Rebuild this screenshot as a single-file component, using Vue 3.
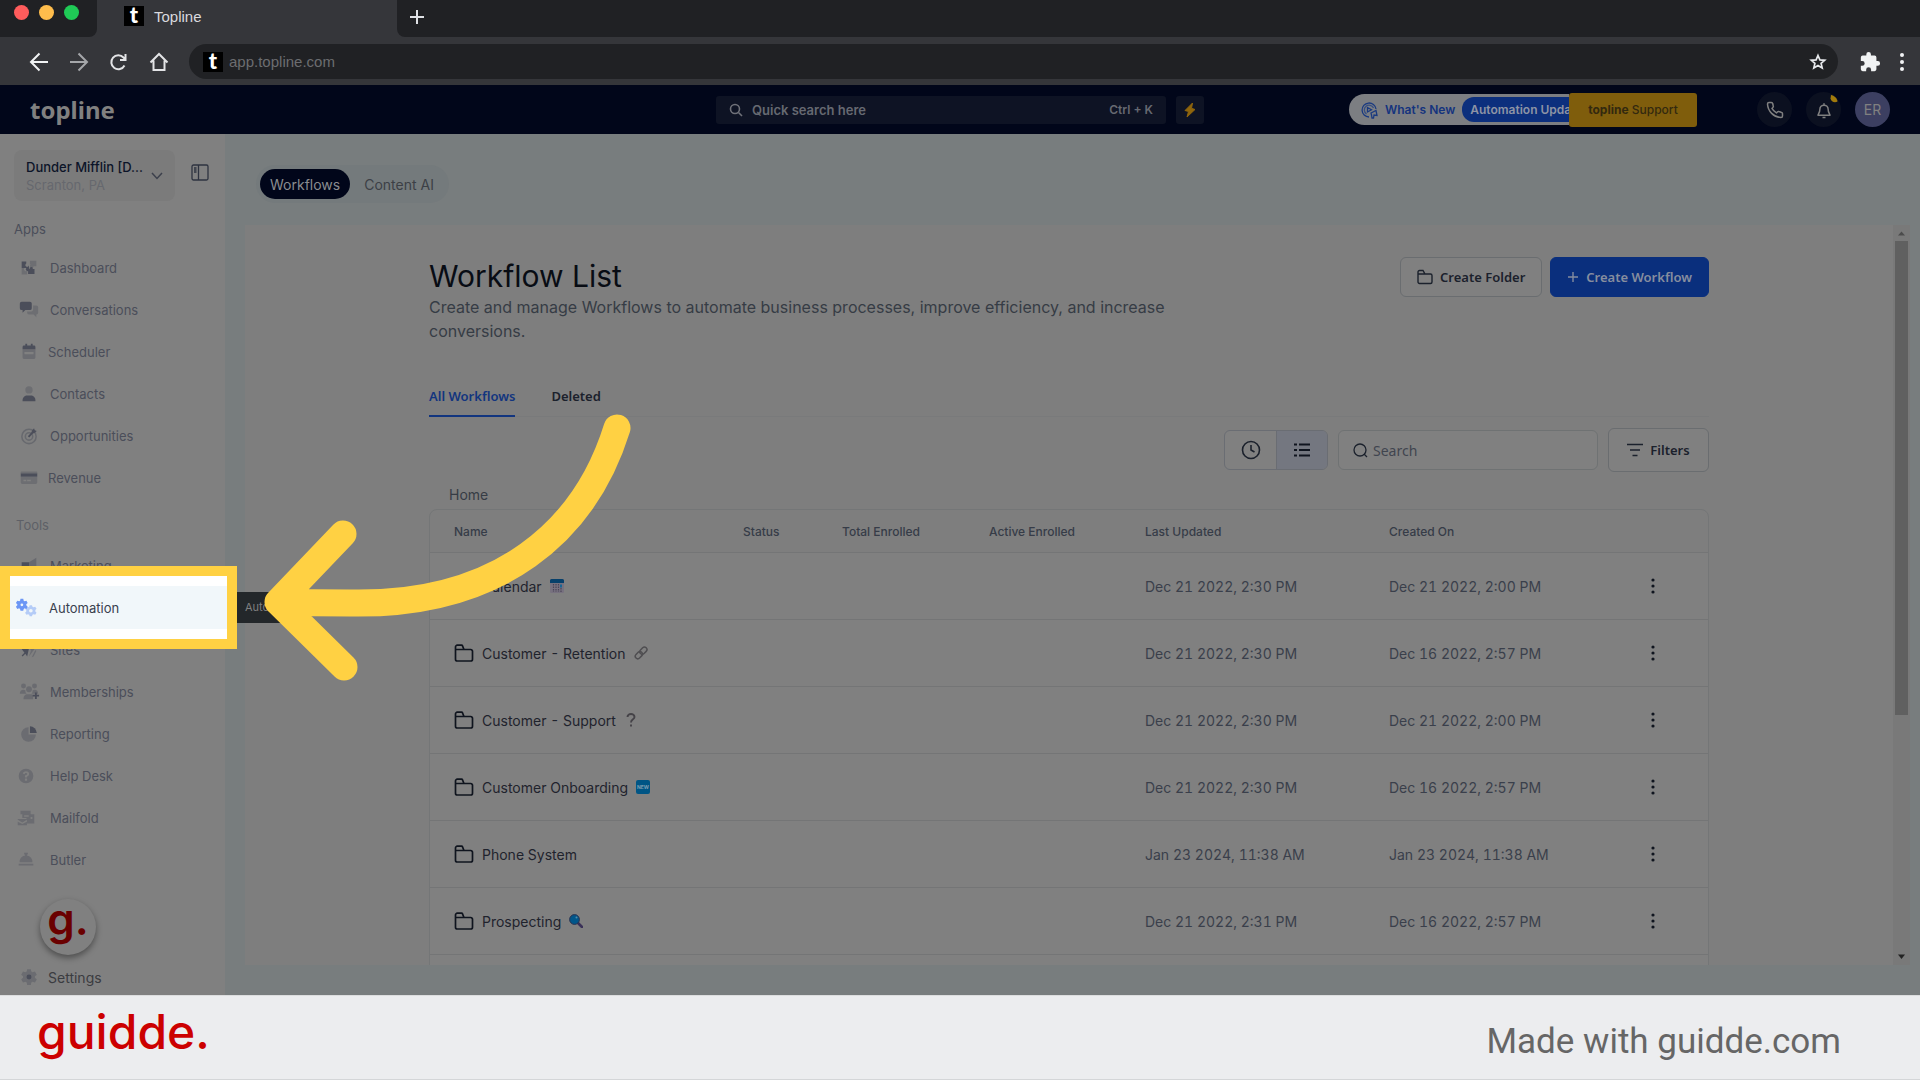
<script setup>
import { ref } from 'vue'

const url = ref('app.topline.com')
const quickSearch = ref('')
const workflowSearch = ref('')

const icons = {
  dashboard:
    '<path d="M4 5h5v2a2 2 0 1 0 3 2v3a2 2 0 1 1-3 0H4z"/><path d="M4 12h3a2 2 0 1 0 3 0v7H4z" opacity=".35"/><path d="M11 13h2a1.600 1.600 0 1 1 3 0h2v5.500h-7z"/><path d="M13 4h7v6h-3a2 2 0 1 1-1-2h-3z" opacity=".35"/>',
  chat:
    '<path d="M4 3h9a2 2 0 0 1 2 2v5a2 2 0 0 1-2 2H8l-3 3v-3H4a2 2 0 0 1-2-2V5a2 2 0 0 1 2-2z"/><path d="M16.500 7H20a2 2 0 0 1 2 2v6a2 2 0 0 1-2 2v3l-3-3h-5a2 2 0 0 1-2-2v-1.500h4.500a2 2 0 0 0 2-2z" opacity=".35"/>',
  calendar:
    '<path d="M5 9h14v9a1.500 1.500 0 0 1-1.500 1.500h-11A1.500 1.500 0 0 1 5 18zm2 3v2.500h10V12z" fill-rule="evenodd" opacity=".4"/><path d="M6.500 5H8V3h2v2h4V3h2v2h1.500A1.500 1.500 0 0 1 19 6.500V9H5V6.500A1.500 1.500 0 0 1 6.500 5z"/>',
  contact:
    '<circle cx="12" cy="7.500" r="4" opacity=".35"/><path d="M5 20v-1.500c0-3 2.500-5 5-5h4c2.500 0 5 2 5 5V20z"/>',
  target:
    '<g fill="none" stroke="currentColor" stroke-width="1.700" opacity=".45"><circle cx="12" cy="12.500" r="7.800"/><circle cx="12" cy="12.500" r="4"/></g><path d="M11.500 13l5-5.500" fill="none" stroke="currentColor" stroke-width="2"/><path d="M15 6.500l2.500-3 .800 2.200 2.200.800-3 2.500H15z"/>',
  card:
    '<path d="M4 5h16a1 1 0 0 1 1 1v1H3V6a1 1 0 0 1 1-1z" opacity=".35"/><path d="M3 7h18v3.500H3z"/><path d="M3 10.500h18V17a1.500 1.500 0 0 1-1.500 1.500h-15A1.500 1.500 0 0 1 3 17zM6 14v1.500h3V14zm4 0v1.500h4V14z" fill-rule="evenodd" opacity=".35"/>',
  megaphone:
    '<path d="M4 8h8v7H9l1 5H7l-1-5H4z"/><path d="M12 8l8-5v18l-8-6z" opacity=".45"/>',
  rocket:
    '<path d="M4 11l8-1-2 9-2-3-3 3-1-1 3-3z"/><path d="M13 9l6-5-1 7-6 8 2-6zM19 12l-4 8 2-1 3-6z" opacity=".4"/>',
  members:
    '<g opacity=".4"><circle cx="6" cy="5.500" r="2.700"/><circle cx="18" cy="5.500" r="2.700"/><circle cx="12" cy="9" r="3.200"/><path d="M2 14c0-3 1.500-4.500 4-4.500l2 .500c0 2 .500 3 1.500 4zM22 14c0-3-1.500-4.500-4-4.500l-2 .500c0 2-.500 3-1.500 4zM6 20c0-4 2-5.500 4-5.500h4c1.500 0 2 .500 2.500 1.500v4z"/></g><path d="M18.500 12.500h2V15H23v2h-2.500v2.500h-2V17H16v-2h2.500z"/>',
  pie:
    '<path d="M11.500 4.500v8h8a8 8 0 1 1-8-8z" opacity=".4"/><path d="M13 3.500a8 8 0 0 1 7.500 7.500H13z"/>',
  help:
    '<g opacity=".4"><path fill-rule="evenodd" d="M12 4a8 8 0 1 0 0 16 8 8 0 0 0 0-16zm-1.200 9.500v-2l2-1c.700-.400.700-1.700-.800-1.700-.900 0-1.300.500-1.500 1.200l-2.100-.600C8.800 7.800 10 6.800 12 6.800c3.800 0 4.400 3.800 2.200 5.100l-1 .600v1zm0 1.300h2.400v2.400h-2.400z"/></g>',
  mail:
    '<path opacity=".4" fill-rule="evenodd" d="M6 4h11v4h4v10h-8v-5l-1-1H8V8H6zM10 9v1.500h5V9zm7 2v2h2v-2zM3 13h10v1l-5 3-5-3zm0 3l5 2.500 5-2.500v4H3z"/>',
  bell:
    '<path opacity=".4" d="M11 6h-1V4h4v2h-1v1a7 7 0 0 1 6 7.500H5A7 7 0 0 1 11 7zM4 16h16v2H4z"/>',
  gear:
    '<path opacity=".4" d="M10 3.500h4l.500 2.500 1.500.900 2.500-.900 2 3.500-2 1.700v1.700l2 1.700-2 3.400-2.500-.800-1.500.900-.500 2.500h-4L9.500 18 8 17.200l-2.500.800-2-3.400 2-1.700v-1.700l-2-1.700L5.500 6l2.500.900L9.500 6z"/><circle cx="12" cy="12" r="2.700"/>',
  gears:
    '<g fill="#6b96f5"><path fill-rule="evenodd" d="M6 2h3l.500 2 1 .600 2-.600 1.300 2.500-1.500 1.400v1.200l1.500 1.400L12.500 13l-2-.600-1 .600L9 15H6l-.500-2-1-.600-2 .600L1 10.500l1.500-1.400V7.900L1 6.500 2.500 4l2 .600 1-.600zm1.500 5a1.500 1.500 0 1 0 0 3 1.500 1.500 0 0 0 0-3z"/><path opacity=".45" fill-rule="evenodd" d="M16 9h2.500l.500 1.700 1.300.600 1.700-.600 1.500 2.200-1.300 1.400v1.400l1.300 1.400-1.500 2.200-1.700-.600-1.300.600-.500 1.700H16l-.500-1.700-1.300-.600-1.700.600-1.500-2.200 1.300-1.400v-1.400L11 12.900l1.500-2.200 1.700.600 1.300-.600zm1.300 4a2 2 0 1 0 0 4 2 2 0 0 0 0-4z"/></g>',
}

const apps = [
  { label: 'Dashboard', icon: 'dashboard' },
  { label: 'Conversations', icon: 'chat' },
  { label: 'Scheduler', icon: 'calendar', kind: 'tight' },
  { label: 'Contacts', icon: 'contact' },
  { label: 'Opportunities', icon: 'target' },
  { label: 'Revenue', icon: 'card', kind: 'tight' },
]

const tools = [
  { label: 'Marketing', icon: 'megaphone' },
  { label: 'Automation', icon: 'gears', kind: 'current' },
  { label: 'Sites', icon: 'rocket' },
  { label: 'Memberships', icon: 'members' },
  { label: 'Reporting', icon: 'pie' },
  { label: 'Help Desk', icon: 'help', kind: 'lead' },
  { label: 'Mailfold', icon: 'mail', kind: 'lead' },
  { label: 'Butler', icon: 'bell', kind: 'lead' },
]

const rows = [
  { name: 'Calendar', emoji: 'calendar', updated: 'Dec 21 2022, 2:30 PM', created: 'Dec 21 2022, 2:00 PM' },
  { name: 'Customer - Retention', emoji: 'link', updated: 'Dec 21 2022, 2:30 PM', created: 'Dec 16 2022, 2:57 PM' },
  { name: 'Customer - Support', emoji: 'question', updated: 'Dec 21 2022, 2:30 PM', created: 'Dec 21 2022, 2:00 PM' },
  { name: 'Customer Onboarding', emoji: 'new', updated: 'Dec 21 2022, 2:30 PM', created: 'Dec 16 2022, 2:57 PM' },
  { name: 'Phone System', emoji: '', updated: 'Jan 23 2024, 11:38 AM', created: 'Jan 23 2024, 11:38 AM' },
  { name: 'Prospecting', emoji: 'search', updated: 'Dec 21 2022, 2:31 PM', created: 'Dec 16 2022, 2:57 PM' },
]
</script>

<template>
  <div class="page">
    <header class="browser">
      <div class="tabstrip">
        <div class="lights"><i class="red"></i><i class="amber"></i><i class="green"></i></div>
        <div class="tab">
          <span class="favicon">t</span>
          <span>Topline</span>
        </div>
        <div class="strip-rest">
          <button class="plain" aria-label="New tab">
            <svg width="16" height="16" viewBox="0 0 16 16"><path d="M8 1v14M1 8h14" stroke="#dfe1e5" stroke-width="2" /></svg>
          </button>
        </div>
      </div>
      <div class="toolbar">
        <div class="nav-buttons">
          <button class="plain" aria-label="Back">
            <svg width="20" height="20" viewBox="0 0 20 20" fill="none" stroke="#f1f3f4" stroke-width="2"><path d="M19 10H2M10.500 1.500L2 10l8.500 8.500" /></svg>
          </button>
          <button class="plain" aria-label="Forward">
            <svg width="20" height="20" viewBox="0 0 20 20" fill="none" stroke="#a5a7aa" stroke-width="2"><path d="M1 10h17M9.500 1.500L18 10l-8.500 8.500" /></svg>
          </button>
          <button class="plain" aria-label="Reload">
            <svg width="20" height="20" viewBox="0 0 20 20" fill="none" stroke="#e3e4e6" stroke-width="2"><path d="M15.500 13.500a7 7 0 1 1-1-8L16.500 7.500M16.500 2v6H11" /></svg>
          </button>
          <button class="plain" aria-label="Home">
            <svg width="20" height="20" viewBox="0 0 20 20" fill="none" stroke="#e3e4e6" stroke-width="2"><path d="M1.500 10.500L10 2l8.500 8.500M4.500 8.500V18h11V8.500" /></svg>
          </button>
        </div>
        <div class="urlbar">
          <span class="favicon">t</span>
          <input v-model="url" aria-label="Address" />
          <svg width="18" height="18" viewBox="0 0 18 18" fill="none" stroke="#e8eaed" stroke-width="1.700"><path d="M9 2.500l1.900 4.400 4.800.400-3.600 3.100 1.100 4.700L9 12.600l-4.200 2.500 1.100-4.700L2.300 7.300l4.800-.400z" /></svg>
        </div>
        <svg class="puzzle" width="22" height="22" viewBox="0 0 24 24" fill="#f1f3f4"><path d="M20.500 11H19V7a2 2 0 0 0-2-2h-4V3.500a2.500 2.500 0 0 0-5 0V5H4a2 2 0 0 0-2 2v3.800h1.500a2.700 2.700 0 0 1 0 5.400H2V20a2 2 0 0 0 2 2h3.800v-1.500a2.700 2.700 0 0 1 5.400 0V22H17a2 2 0 0 0 2-2v-4h1.500a2.500 2.500 0 0 0 0-5z" /></svg>
        <svg class="more" width="6" height="20" viewBox="0 0 6 20" fill="#f1f3f4"><circle cx="3" cy="3" r="2" /><circle cx="3" cy="10" r="2" /><circle cx="3" cy="17" r="2" /></svg>
      </div>
    </header>

    <header class="appbar">
      <div class="brand">topline</div>
      <div class="quick">
        <label class="quick-search">
          <svg width="14" height="14" viewBox="0 0 14 14" fill="none" stroke="#6f7179" stroke-width="1.600"><circle cx="6" cy="6" r="4.500" /><path d="M9.500 9.500L13 13" /></svg>
          <input v-model="quickSearch" aria-label="Quick search" placeholder="Quick search here" />
          <span>Ctrl + K</span>
        </label>
        <button class="bolt" aria-label="Quick actions">
          <svg width="12" height="16" viewBox="0 0 12 16"><path d="M8.500 1L1 8.500l3.500 1L3 15l8-7.500-3.500-1.200z" fill="#8f650c" stroke="#8f650c" stroke-linejoin="round" /></svg>
        </button>
      </div>
      <div class="appbar-right">
        <a href="#" class="news">
          <svg width="17" height="18" viewBox="0 0 17 18" fill="none" stroke="#1a3a80" stroke-width="1.300"><path d="M8 16a7 7 0 1 1 7-8" /><path d="M5.500 13A4.800 4.800 0 1 1 12.500 7" opacity=".7" /><path d="M6.500 6.500l4 2.200-4 2.300zM10 12l5-2.500 1 5-3-.500-.500 3H11l-.500-3z" /></svg>
          <span>What's New</span>
          <b>Automation Upda</b>
        </a>
        <button class="support"><b>topline</b> Support</button>
        <div class="circles">
          <button class="circle" aria-label="Phone">
            <svg width="18" height="18" viewBox="0 0 24 24" fill="none" stroke="#808080" stroke-width="2" stroke-linejoin="round"><path d="M22 17v3a2 2 0 0 1-2 2A19 19 0 0 1 2 4a2 2 0 0 1 2-2h3a2 2 0 0 1 2 1.700l.700 3a2 2 0 0 1-.600 2L7.900 9.900a16 16 0 0 0 6 6l1.300-1.300a2 2 0 0 1 2-.500l3 .800A2 2 0 0 1 22 17z" /></svg>
          </button>
          <button class="circle" aria-label="Notifications">
            <svg width="18" height="18" viewBox="0 0 24 24" fill="none" stroke="#808080" stroke-width="2" stroke-linejoin="round"><path d="M12 3v2M6.500 11a5.500 5.500 0 0 1 11 0c0 5 2.500 6.500 2.500 8H4c0-1.500 2.500-3 2.500-8zM10 22h4" /></svg>
            <svg class="dot" width="8" height="8" viewBox="0 0 8 8"><path d="M1 0C4 0 7.500 4 7.500 6.500 5 8 1 7 .500 3.500z" fill="#a17a0c" /></svg>
          </button>
          <button class="circle avatar">ER</button>
        </div>
      </div>
    </header>

    <div class="body">
      <aside class="sidebar">
        <div class="account-row">
          <button class="account">
            <span class="account-text"><b>Dunder Mifflin [D...</b><small>Scranton, PA</small></span>
            <svg width="12" height="8" viewBox="0 0 12 8" fill="none" stroke="#3c404c" stroke-width="1.500"><path d="M1 1l5 5.500L11 1" /></svg>
          </button>
          <button class="plain" aria-label="Toggle sidebar">
            <svg width="18" height="17" viewBox="0 0 18 17" fill="none" stroke="#2e3340" stroke-width="1.300"><rect x="1" y="1" width="16" height="15" rx="1.500" /><path d="M7.500 1v15M3 4h2.500M3 6h2.500M3 8h2.500" /></svg>
          </button>
        </div>
        <h2>Apps</h2>
        <nav>
          <a v-for="item in apps" :key="item.label" href="#" class="item" :class="item.kind">
            <svg width="22" height="22" viewBox="0 0 24 24" fill="currentColor" v-html="icons[item.icon]"></svg>
            <span>{{ item.label }}</span>
          </a>
        </nav>
        <h2 class="tools-title">Tools</h2>
        <nav>
          <a v-for="item in tools" :key="item.label" href="#" class="item" :class="item.kind">
            <svg width="22" height="22" viewBox="0 0 24 24" fill="currentColor" v-html="icons[item.icon]"></svg>
            <span>{{ item.label }}</span>
            <span v-if="item.kind === 'current'" class="tooltip">Automation</span>
          </a>
        </nav>
        <a href="#" class="item tight settings">
          <svg width="22" height="22" viewBox="0 0 24 24" fill="currentColor" v-html="icons.gear"></svg>
          <span>Settings</span>
        </a>
        <button class="launcher">g.</button>
      </aside>

      <main class="main">
        <div class="switch">
          <button class="on">Workflows</button>
          <button>Content AI</button>
        </div>
        <div class="panel">
          <div class="scroll">
            <div class="content">
              <div class="head">
                <div>
                  <h1>Workflow List</h1>
                  <p>Create and manage Workflows to automate business processes, improve efficiency, and increase conversions.</p>
                </div>
                <div class="actions">
                  <button class="btn">
                    <svg width="16" height="16" viewBox="0 0 16 16" fill="none" stroke="#1b212c" stroke-width="1.400"><path d="M1 5V3a1.500 1.500 0 0 1 1.500-1.500H6L8 5h5.500A1.500 1.500 0 0 1 15 6.500V13a1.500 1.500 0 0 1-1.500 1.500h-11A1.500 1.500 0 0 1 1 13V5h7" /></svg>
                    Create Folder
                  </button>
                  <button class="btn primary">
                    <svg width="12" height="12" viewBox="0 0 12 12" stroke="#848c9f" stroke-width="1.400"><path d="M6 1v10M1 6h10" /></svg>
                    Create Workflow
                  </button>
                </div>
              </div>
              <div class="tabs">
                <button class="on">All Workflows</button>
                <button>Deleted</button>
              </div>
              <div class="filters">
                <div class="views">
                  <button aria-label="Recent">
                    <svg width="20" height="20" viewBox="0 0 20 20" fill="none" stroke="#1b212c" stroke-width="1.600"><circle cx="10" cy="10" r="8.500" /><path d="M10 5v5l3.500 2" /></svg>
                  </button>
                  <button class="on" aria-label="List">
                    <svg width="18" height="16" viewBox="0 0 18 16" stroke="#10151f" stroke-width="2"><path d="M6 2.500h11M6 8h11M6 13.500h11M1 2.500h3M1 8h3M1 13.500h3" /></svg>
                  </button>
                </div>
                <label class="search">
                  <svg width="15" height="15" viewBox="0 0 15 15" fill="none" stroke="#1b212c" stroke-width="1.300"><circle cx="7" cy="7" r="6" /><path d="M11 11l3 3" /></svg>
                  <input v-model="workflowSearch" aria-label="Search workflows" placeholder="Search" />
                </label>
                <button class="btn filter">
                  <svg width="16" height="14" viewBox="0 0 16 14" stroke="#1b212c" stroke-width="1.600"><path d="M0 1.500h16M3 7h10M5.500 12.500h5" /></svg>
                  Filters
                </button>
              </div>
              <div class="crumb">Home</div>
              <div class="table-wrap">
                <table>
                  <colgroup>
                    <col class="c-name" /><col class="c-status" /><col class="c-total" /><col class="c-active" /><col class="c-updated" /><col class="c-created" /><col />
                  </colgroup>
                  <thead>
                    <tr>
                      <th>Name</th><th>Status</th><th>Total Enrolled</th><th>Active Enrolled</th><th>Last Updated</th><th>Created On</th><th></th>
                    </tr>
                  </thead>
                  <tbody>
                    <tr v-for="row in rows" :key="row.name">
                      <td>
                        <div class="name">
                          <svg class="folder" width="20" height="18" viewBox="0 0 20 18" fill="none" stroke="#0f141e" stroke-width="1.700"><path d="M1.500 5.500V3A1.800 1.800 0 0 1 3.300 1.200H7.500a1 1 0 0 1 1 .700l1.500 3.600h6.700a1.800 1.800 0 0 1 1.800 1.800v7.900a1.800 1.800 0 0 1-1.800 1.800H3.300a1.800 1.800 0 0 1-1.800-1.800V5.500H10" /></svg>
                          <span>{{ row.name }}</span>
                          <svg v-if="row.emoji === 'calendar'" width="14" height="14" viewBox="0 0 14 14"><rect width="14" height="14" rx="1.500" fill="#77717f" /><path d="M0 4V1.500A1.500 1.500 0 0 1 1.500 0h11A1.500 1.500 0 0 1 14 1.500V4z" fill="#07406b" /><path d="M3.500 5v8M6 5v8M8.500 5v8M11 9v4" stroke="#4a4458" stroke-width="1.200" stroke-dasharray="1.500 1" /><path d="M11 5.500v3" stroke="#00659c" stroke-width="1.600" /></svg>
                          <svg v-else-if="row.emoji === 'link'" width="14" height="14" viewBox="0 0 14 14" fill="none" stroke="#4f4e51" stroke-width="1.500"><rect x="-3.500" y="-2.500" width="8" height="5" rx="2.500" transform="translate(4.500 9.500) rotate(-45)" /><rect x="-3.500" y="-2.500" width="8" height="5" rx="2.500" transform="translate(9 5) rotate(-45)" /></svg>
                          <svg v-else-if="row.emoji === 'question'" class="question" width="10" height="14" viewBox="0 0 10 14" fill="none" stroke="#454348" stroke-width="1.900"><path d="M1.500 4C1.500 0 8.500 0 8.500 4 8.500 6.500 5 6 5 9.500M5 11.500v2" /></svg>
                          <span v-else-if="row.emoji === 'new'" class="new">NEW</span>
                          <svg v-else-if="row.emoji === 'search'" width="14" height="14" viewBox="0 0 14 14"><path d="M9 9l4 4" stroke="#3a3158" stroke-width="2.600" stroke-linecap="round" /><circle cx="5.500" cy="5.500" r="4.900" fill="#00568a" stroke="#2c3350" /><circle cx="7.500" cy="3.500" r="1" fill="#4f8bab" /></svg>
                        </div>
                      </td>
                      <td></td><td></td><td></td>
                      <td>{{ row.updated }}</td>
                      <td>{{ row.created }}</td>
                      <td>
                        <button class="plain kebab" :aria-label="'Actions for ' + row.name">
                          <svg width="4" height="16" viewBox="0 0 4 16" fill="#0f141e"><circle cx="2" cy="2" r="1.600" /><circle cx="2" cy="8" r="1.600" /><circle cx="2" cy="14" r="1.600" /></svg>
                        </button>
                      </td>
                    </tr>
                    <tr><td colspan="7"></td></tr>
                  </tbody>
                </table>
              </div>
            </div>
          </div>
          <div class="scrollbar">
            <svg width="17" height="16" viewBox="0 0 17 16"><path d="M5 10.500L8.500 6.500l3.500 4z" fill="#4c4c4c" /></svg>
            <div class="track"><div class="thumb"></div></div>
            <svg width="17" height="16" viewBox="0 0 17 16"><path d="M5 5.500L8.500 10 12 5.500z" fill="#222" /></svg>
          </div>
        </div>
      </main>
    </div>

    <footer class="footer">
      <div class="logo">guidde.</div>
      <div class="made">Made with guidde.com</div>
    </footer>

    <svg class="arrow" width="370" height="270" viewBox="264 412 370 270" fill="none" stroke="#ffd143" stroke-width="27" stroke-linecap="round" stroke-linejoin="round">
      <path d="M617 427C585 530 500 605 350 602Q314 602 278 601M343 533L278 601L344 666" />
    </svg>
  </div>
</template>

<style>
body {
  margin: 0;
}
</style>

<style scoped>
* {
  box-sizing: border-box;
}
.page {
  position: relative;
  display: flex;
  flex-direction: column;
  height: 100vh;
  overflow: hidden;
  font-family: Inter, 'Liberation Sans', sans-serif;
  font-size: 14px;
  color: #1b212c;
}
button,
input {
  font: inherit;
  color: inherit;
  border: 0;
  background: none;
  padding: 0;
  margin: 0;
}
input {
  min-width: 0;
  flex: 1;
  outline: 0;
}
a {
  color: inherit;
  text-decoration: none;
}
svg {
  flex: none;
  display: block;
}
h1,
h2,
p {
  margin: 0;
  font-weight: 400;
}
.plain {
  display: flex;
}

/* Browser frame */
.browser {
  flex: none;
  background: #35363a;
  font-family: 'Liberation Sans', Arial, sans-serif;
  font-size: 15px;
}
.tabstrip {
  display: flex;
  height: 37px;
}
.lights {
  display: flex;
  gap: 10px;
  width: 97px;
  padding: 5px 0 0 14px;
  background: #202124;
  border-bottom-right-radius: 8px;
}
.lights i {
  width: 15px;
  height: 15px;
  border-radius: 50%;
}
.red {
  background: #ff5c5c;
}
.amber {
  background: #ffbd4c;
}
.green {
  background: #1fca56;
}
.tab {
  display: flex;
  align-items: center;
  gap: 10px;
  width: 300px;
  padding: 0 0 5px 27px;
  color: #d9dade;
}
.favicon {
  flex: none;
  width: 20px;
  height: 20px;
  background: #000;
  color: #fff;
  font: 900 22px/18px Lato, sans-serif;
  text-align: center;
}
.strip-rest {
  flex: 1;
  padding: 9px 12px;
  background: #202124;
  border-bottom-left-radius: 8px;
}
.toolbar {
  display: flex;
  align-items: center;
  height: 48px;
  padding: 1px 15px 0 29px;
}
.nav-buttons {
  display: flex;
  gap: 20px;
  width: 160px;
}
.urlbar {
  flex: 1;
  display: flex;
  align-items: center;
  gap: 6px;
  height: 35px;
  padding: 0 11px 0 14px;
  border-radius: 18px;
  background: #202124;
  color: #6c6d70;
}
.puzzle {
  margin: 0 18px 0 21px;
}

/* App bar */
.appbar {
  flex: none;
  display: grid;
  grid-template-columns: 1fr auto 1fr;
  align-items: center;
  height: 49px;
  padding: 0 30px;
  background: #01061a;
}
.brand {
  font: 700 24px/30px 'Noto Sans', sans-serif;
  color: #808080;
}
.quick {
  display: flex;
  gap: 10px;
}
.quick-search {
  display: flex;
  align-items: center;
  gap: 9px;
  width: 450px;
  height: 28px;
  padding: 0 13px;
  border-radius: 3px;
  background: #0e1324;
  color: #666971;
  font-size: 13px;
  font-weight: 600;
}
.quick-search span {
  font-size: 12px;
}
.quick-search input::placeholder,
.search input::placeholder {
  color: inherit;
  opacity: 1;
}
.bolt {
  display: flex;
  align-items: center;
  justify-content: center;
  width: 28px;
  height: 28px;
  border-radius: 3px;
  background: #0e1324;
}
.appbar-right {
  display: flex;
  align-items: center;
  justify-content: flex-end;
}
.news {
  display: flex;
  align-items: center;
  gap: 7px;
  width: 220px;
  height: 31px;
  padding-left: 12px;
  white-space: nowrap;
  border-radius: 16px 0 0 16px;
  background: #7c7e82;
  color: #14337e;
  font-size: 12px;
  font-weight: 600;
}
.news b {
  flex: 1;
  padding-left: 8px;
  border-radius: 12px 0 0 12px;
  background: #0c2f7d;
  color: #8d94a5;
  font-weight: 600;
  line-height: 25px;
}
.support {
  position: relative;
  width: 128px;
  height: 34px;
  border-radius: 3px;
  background: #7f5d0c;
  color: #33290f;
  font-size: 12px;
  font-weight: 500;
}
.support b {
  font-weight: 700;
}
.circles {
  display: flex;
  gap: 14px;
  margin-left: 60px;
}
.circle {
  position: relative;
  display: flex;
  align-items: center;
  justify-content: center;
  width: 35px;
  height: 35px;
  border-radius: 50%;
  background: #0b1020;
}
.dot {
  position: absolute;
  top: 3px;
  right: 3px;
}
.avatar {
  background: #3c3f61;
  color: #808080;
}

/* Sidebar */
.body {
  flex: 1;
  display: flex;
  min-height: 0;
}
.sidebar {
  position: relative;
  flex: none;
  display: flex;
  flex-direction: column;
  width: 225px;
  padding-top: 16px;
  background: #808080;
  color: #4b4e5a;
  font-size: 13px;
}
.account-row {
  display: flex;
  align-items: center;
  gap: 16px;
  padding-left: 14px;
}
.account-row .plain {
  margin-bottom: 6px;
}
.account {
  display: flex;
  align-items: center;
  justify-content: space-between;
  width: 161px;
  height: 51px;
  padding: 0 12px;
  border-radius: 8px;
  background: #7b7b7b;
  text-align: left;
  white-space: nowrap;
}
.account-text b,
.account-text small {
  display: block;
  font-size: 13px;
  font-weight: 500;
  line-height: 18px;
  color: #0c1428;
}
.account-text small {
  font-weight: 400;
  color: #66686e;
}
.sidebar h2 {
  margin: 18px 0 8px 14px;
  font-size: 13px;
  line-height: 20px;
}
.sidebar .tools-title {
  margin: 16px 0 10px 16px;
  color: #5e6067;
}
.item {
  position: relative;
  display: flex;
  align-items: center;
  gap: 10px;
  height: 42px;
  padding-left: 18px;
}
.tight {
  gap: 8px;
}
.lead {
  gap: 13px;
  padding-left: 15px;
}
.settings {
  height: 36px;
  margin-top: auto;
  color: #3b3c40;
  font-size: 14px;
}
.settings svg {
  color: #4b4e5a;
}
.current {
  z-index: 1;
  gap: 12px;
  padding-left: 15px;
  color: #39404d;
}
.current::before {
  content: '';
  position: absolute;
  z-index: -1;
  inset: -21px -12px -20px 0;
  border: 10px solid #ffd143;
  background: linear-gradient(#fff 10px, #f1f7fa 10px, #f1f7fa 53px, #fff 53px) padding-box;
}
.tooltip {
  position: absolute;
  left: 237px;
  top: 5px;
  padding: 0 8px;
  border-radius: 0 3px 3px 0;
  background: #23272a;
  color: #808080;
  font-size: 11px;
  line-height: 31px;
}
.launcher {
  position: absolute;
  left: 40px;
  bottom: 40px;
  width: 56px;
  height: 56px;
  padding-bottom: 16px;
  border-radius: 50%;
  background: #808080;
  box-shadow: 0 3px 6px rgba(0, 0, 0, 0.4);
  color: #6a0000;
  font-size: 44px;
  font-weight: 600;
  line-height: 40px;
}

/* Main area */
.main {
  flex: 1;
  display: flex;
  flex-direction: column;
  align-items: flex-start;
  min-width: 0;
  padding: 31px 10px 30px 20px;
  background: #787d7e;
}
.switch {
  display: flex;
  flex: none;
  gap: 3px;
  height: 38px;
  margin: 0 0 22px 11px;
  padding: 4px;
  border-radius: 19px;
  background: #747a7c;
  color: #3c4046;
}
.switch button {
  padding: 0 11px;
  border-radius: 15px;
}
.switch .on {
  padding: 0 10px;
  background: #01061a;
  color: #8a8c90;
}
.panel {
  flex: 1;
  display: flex;
  align-self: stretch;
  min-height: 0;
  background: #7e7e7e;
}
.scroll {
  flex: 1;
  min-width: 0;
  overflow: hidden;
}
.content {
  max-width: 1280px;
  margin: 0 auto;
  padding-top: 32px;
}
.head {
  display: flex;
  justify-content: space-between;
  align-items: flex-start;
}
h1 {
  font-size: 30px;
  line-height: 38px;
  color: #080c14;
}
.head p {
  max-width: 768px;
  font-size: 16px;
  line-height: 24px;
  color: #363c45;
}
.actions {
  display: flex;
  gap: 8px;
}
.btn {
  display: flex;
  align-items: center;
  justify-content: center;
  gap: 7px;
  height: 40px;
  padding: 0 16px;
  border: 1px solid #6a6d70;
  border-radius: 6px;
  background: #808080;
  font: 600 13px 'Noto Sans', sans-serif;
}
.primary {
  border-color: #0a2f7d;
  background: #0a2f7d;
  color: #868d9f;
}
.tabs {
  display: flex;
  gap: 36px;
  height: 34px;
  margin-top: 40px;
  border-bottom: 1px solid #797a7b;
  font: 600 13px/26px 'Noto Sans', sans-serif;
}
.tabs button {
  height: 34px;
  padding-bottom: 6px;
  border-bottom: 2px solid transparent;
}
.tabs .on {
  border-color: #12357f;
  color: #12357f;
}
.filters {
  display: flex;
  align-items: center;
  justify-content: flex-end;
  gap: 10px;
  margin-top: 11px;
}
.views {
  display: flex;
  height: 40px;
  border: 1px solid #6a6d73;
  border-radius: 6px;
  background: #808080;
  overflow: hidden;
}
.views button {
  display: flex;
  align-items: center;
  justify-content: center;
  width: 51px;
}
.views .on {
  border-left: 1px solid #6a6d73;
  background: #747780;
}
.search {
  display: flex;
  align-items: center;
  gap: 5px;
  width: 260px;
  height: 40px;
  padding: 0 14px;
  border: 1px solid #6f7273;
  border-radius: 6px;
  background: #808080;
  color: #40454f;
  font: 14px 'Noto Sans', sans-serif;
}
.filter {
  width: 101px;
  height: 44px;
  padding: 0;
}
.crumb {
  margin: 13px 20px 4px;
  line-height: 20px;
  color: #363c45;
}
.table-wrap {
  border: 1px solid #747677;
  border-radius: 8px 8px 0 0;
}
table {
  width: 100%;
  table-layout: fixed;
  border-collapse: separate;
  border-spacing: 0;
}
.c-name {
  width: 313px;
}
.c-status {
  width: 99px;
}
.c-total {
  width: 147px;
}
.c-active {
  width: 156px;
}
.c-updated {
  width: 244px;
}
.c-created {
  width: 254px;
}
th,
td {
  padding: 0;
  border-bottom: 1px solid #747576;
  text-align: left;
}
th {
  height: 43px;
  font-size: 12px;
  font-weight: 500;
  color: #363c48;
}
td {
  height: 67px;
  background: #808080;
  color: #3a3f4b;
  font-variant-numeric: tabular-nums;
}
th:first-child,
td:first-child {
  padding-left: 24px;
}
.name {
  display: flex;
  align-items: center;
  gap: 8px;
  color: #1f232d;
}
.question {
  margin-left: 2px;
}
.new {
  width: 14px;
  height: 14px;
  border-radius: 2px;
  background: #005585;
  color: #7e9fb2;
  font-size: 5px;
  font-weight: 700;
  line-height: 14px;
  text-align: center;
}
.kebab {
  padding: 8px;
}
.scrollbar {
  flex: none;
  display: flex;
  flex-direction: column;
  width: 17px;
  background: #797979;
}
.track {
  flex: 1;
  padding: 0 2px;
}
.thumb {
  height: 67%;
  background: #606060;
}

/* Footer */
.footer {
  flex: none;
  display: flex;
  justify-content: space-between;
  align-items: center;
  height: 85px;
  padding: 0 79px 0 37px;
  border-top: 1px solid #dcddde;
  border-bottom: 1px solid #d4d6d8;
  background: #ecedef;
}
.logo {
  padding-bottom: 12px;
  color: #c00;
  font-size: 48px;
  font-weight: 500;
  line-height: 60px;
}
.made {
  padding-top: 8px;
  color: #666;
  font: 35px/42px Roboto, sans-serif;
}
.arrow {
  position: absolute;
  left: 264px;
  top: 413px;
  z-index: 2;
}
</style>
